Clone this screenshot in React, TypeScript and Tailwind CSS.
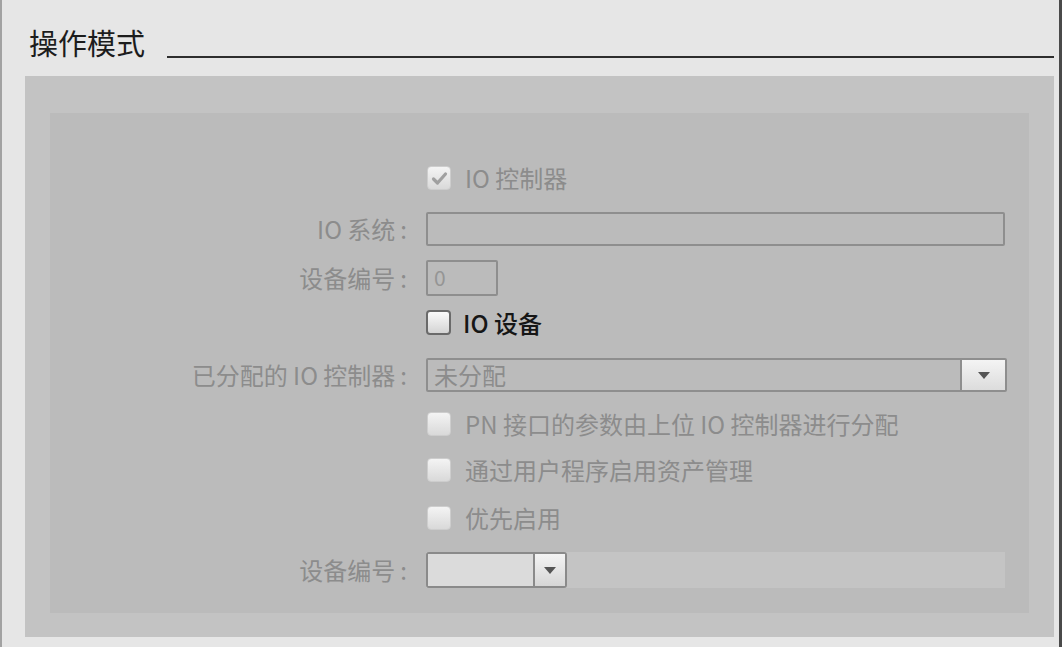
import React from "react";

const labelCls =
  "text-[24px] leading-none text-[#8c8c8c] text-right pr-[8px] whitespace-nowrap";

function Row({
  label,
  className,
  children,
}: {
  label?: string;
  className: string;
  children: React.ReactNode;
}) {
  return (
    <div className={`grid grid-cols-[365px_1fr] gap-x-[11px] items-center ${className}`}>
      <div className={labelCls}>
        {label && (
          <>
            {label}
            <span className="ml-[5px]">:</span>
          </>
        )}
      </div>
      <div className="flex items-center h-full">{children}</div>
    </div>
  );
}

function Box({ checked, enabled }: { checked?: boolean; enabled?: boolean }) {
  if (enabled) {
    return (
      <div className="w-[25px] h-[25px] rounded-[4px] border-2 border-[#6a6a6a] bg-gradient-to-b from-[#fafafa] to-[#d4d4d4] shrink-0" />
    );
  }
  return (
    <div className="w-[24px] h-[24px] ml-[1px] rounded-[4px] border border-[#cdcdcd] bg-gradient-to-b from-[#f4f4f4] to-[#d9d9d9] flex items-center justify-center shrink-0">
      {checked && (
        <svg width="17" height="15" viewBox="0 0 17 15">
          <path
            d="M2.5 8 L6.5 12 L14.5 3"
            fill="none"
            stroke="#a0a0a0"
            strokeWidth="3.2"
            strokeLinecap="round"
            strokeLinejoin="round"
          />
        </svg>
      )}
    </div>
  );
}

function Arrow() {
  return (
    <svg width="12" height="7" viewBox="0 0 12 7">
      <path d="M0 0 H12 L6 7 Z" fill="#555555" />
    </svg>
  );
}

export default function App() {
  return (
    <div className="w-[1062px] h-[647px] bg-[#e6e6e6] border-l-2 border-l-[#a2a2a2] border-r-[3px] border-r-[#4a4a4a] flex flex-col font-['Noto_Sans_CJK_SC','Noto_Sans',sans-serif] overflow-hidden">
      {/* Title */}
      <div className="flex items-end pl-[27px] pr-[5px] pt-[28px]">
        <span className="text-[29px] leading-[29px] text-[#1c1c1c]">操作模式</span>
        <div className="flex-1 h-[2px] bg-[#2e2e2e] ml-[22px] -mb-[1px]" />
      </div>

      {/* Outer panel */}
      <div className="ml-[23px] mr-[5px] mt-[19px] h-[561px] bg-[#c3c3c3] px-[25px] pt-[37px] pb-[24px]">
        {/* Inner panel */}
        <div className="h-full bg-[#bbbbbb] pr-[24px] flex flex-col">
          <Row className="h-[24px] mt-[53px]">
            <Box checked />
            <span className="ml-[14px] text-[24px] leading-none text-[#8c8c8c]">IO 控制器</span>
          </Row>

          <Row label="IO 系统" className="h-[34px] mt-[22px]">
            <div className="w-full h-full border-2 border-[#8e8e8e] rounded-[2px]" />
          </Row>

          <Row label="设备编号" className="h-[35px] mt-[14px]">
            <div className="w-[72px] h-full border-2 border-[#8e8e8e] rounded-[2px] flex items-center pl-[6px] text-[21px] text-[#959595]">
              0
            </div>
          </Row>

          <Row className="h-[24px] mt-[15px]">
            <Box enabled />
            <span className="ml-[12px] text-[24px] leading-none font-medium text-[#161616]">IO 设备</span>
          </Row>

          <Row label="已分配的 IO 控制器" className="h-[34px] mt-[24px]">
            <div className="w-[581px] h-full border-2 border-[#8e8e8e] rounded-[2px] flex">
              <div className="flex-1 flex items-center pl-[6px] text-[24px] leading-none text-[#8c8c8c]">
                未分配
              </div>
              <div className="w-[45px] h-full border-l-2 border-[#8e8e8e] bg-gradient-to-b from-[#f4f4f4] to-[#dcdcdc] flex items-center justify-center">
                <Arrow />
              </div>
            </div>
          </Row>

          <Row className="h-[24px] mt-[20px]">
            <Box />
            <span className="ml-[14px] text-[24px] leading-none text-[#8c8c8c]">
              PN 接口的参数由上位 IO 控制器进行分配
            </span>
          </Row>

          <Row className="h-[24px] mt-[22px]">
            <Box />
            <span className="ml-[14px] text-[24px] leading-none text-[#8c8c8c]">
              通过用户程序启用资产管理
            </span>
          </Row>

          <Row className="h-[24px] mt-[24px]">
            <Box />
            <span className="ml-[14px] text-[24px] leading-none text-[#8c8c8c]">优先启用</span>
          </Row>

          <Row label="设备编号" className="h-[36px] mt-[22px]">
            <div className="w-full h-full bg-[#c4c4c4] flex">
              <div className="w-[141px] h-full border-2 border-[#8a8a8a] rounded-[3px] flex">
                <div className="flex-1 bg-[#dbdbdb]" />
                <div className="w-[32px] h-full border-l-2 border-[#8a8a8a] bg-gradient-to-b from-[#f4f4f4] to-[#d6d6d6] flex items-center justify-center">
                  <Arrow />
                </div>
              </div>
            </div>
          </Row>
        </div>
      </div>
    </div>
  );
}
